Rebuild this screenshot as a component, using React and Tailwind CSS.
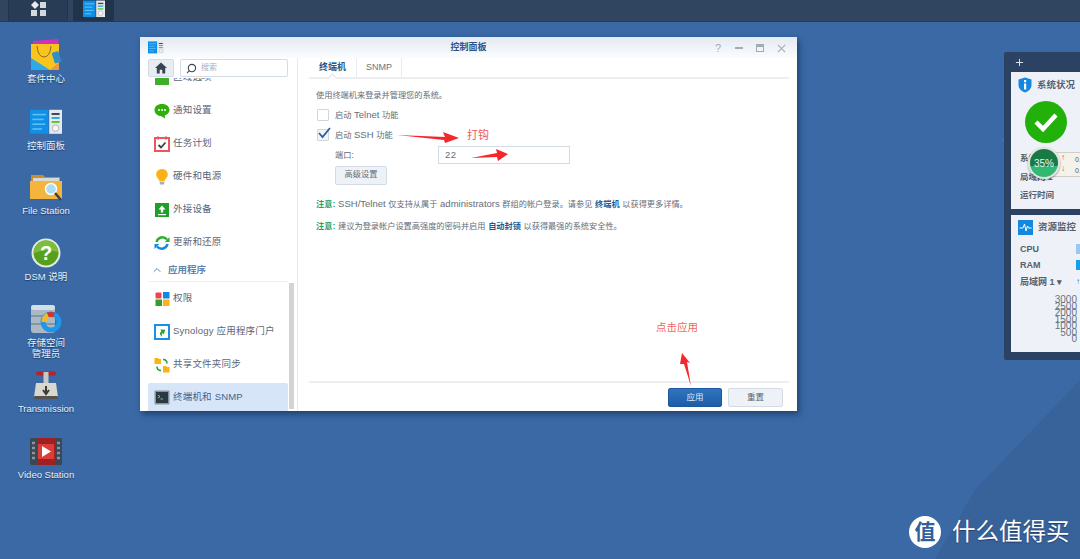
import React from "react";
import { Search, ChevronUp, Plus } from "lucide-react";

const font = { fontFamily: '"Liberation Sans","Noto Sans CJK SC",sans-serif' };

const PanelIcon = ({ size = 32 }) => (
  <svg width={size} height={size * 0.8} viewBox="0 0 40 32">
    <rect x="0" y="1" width="23" height="30" fill="#0f8fe6" />
    <rect x="3" y="6" width="17" height="2" fill="#5cc0f5" />
    <rect x="3" y="12" width="14" height="2" fill="#5cc0f5" />
    <rect x="3" y="18" width="16" height="2" fill="#5cc0f5" />
    <rect x="3" y="24" width="12" height="2" fill="#5cc0f5" />
    <rect x="24" y="1" width="16" height="30" fill="#e6e9ec" />
    <rect x="27" y="5" width="10" height="2.5" fill="#3b4a58" />
    <rect x="27" y="10" width="10" height="2.5" fill="#37a8df" />
    <rect x="27" y="15" width="10" height="2.5" fill="#6cbf3b" />
    <circle cx="32" cy="24" r="4" fill="#fafafa" stroke="#9aa5ad" />
  </svg>
);

const desktopIcons = [
  {
    top: 38,
    label: ["套件中心"],
    icon: (
      <svg width="32" height="34" viewBox="0 0 32 34">
        <path d="M3 3 L28 1 L29 8 L3 8Z" fill="#d62fc0" />
        <rect x="1" y="6" width="28" height="26" fill="#f7c51e" />
        <path d="M1 32 V20 L20 32Z" fill="#2fa9e6" />
        <path d="M20 32 L29 24 V32Z" fill="#e79a45" />
        <path d="M7 8 Q8 19 14 19 Q20 19 21 8" fill="none" stroke="#8a6a20" strokeWidth="1" />
        <rect x="23" y="14" width="7" height="11" rx="1" fill="#2f8fc9" transform="rotate(-18 26 19)" />
      </svg>
    ),
  },
  { top: 105, label: ["控制面板"], icon: <PanelIcon /> },
  {
    top: 170,
    label: ["File Station"],
    icon: (
      <svg width="32" height="28" viewBox="0 0 32 28">
        <path d="M1 5 V2 H13 L15 4 H30 V10 H1Z" fill="#c98f2e" />
        <rect x="3" y="5" width="26" height="5" fill="#d9d9d6" />
        <path d="M0 8 H32 V26 H0Z" fill="#f5b53c" />
        <circle cx="21" cy="16" r="5.5" fill="#a8dcf7" stroke="#fff" strokeWidth="1.5" />
        <path d="M25 20 L31 27" stroke="#38434d" strokeWidth="2.5" />
      </svg>
    ),
  },
  {
    top: 236,
    label: ["DSM 说明"],
    icon: (
      <svg width="30" height="30" viewBox="0 0 30 30">
        <circle cx="15" cy="15" r="14.5" fill="#e4e8e2" />
        <circle cx="15" cy="15" r="12.5" fill="#55a01c" />
        <path d="M3 15 a12 12 0 0 1 24 -1 q-12 -4 -24 1Z" fill="#7dbd3c" />
        <text x="15" y="22" textAnchor="middle" fontSize="20" fontWeight="700" fill="#fff" style={font}>?</text>
      </svg>
    ),
  },
  {
    top: 302,
    label: ["存储空间", "管理员"],
    icon: (
      <svg width="32" height="30" viewBox="0 0 32 30">
        <rect x="1" y="1" width="24" height="28" rx="3" fill="#a9bac6" />
        <rect x="1" y="1" width="24" height="5" rx="2.5" fill="#d2dfe7" />
        <path d="M1 12 H25 M1 20 H25" stroke="#62737f" strokeWidth="1.2" />
        <circle cx="21" cy="18" r="8" fill="none" stroke="#1e96ea" strokeWidth="5" />
        <path d="M14 18 a8 8 0 0 1 4 -7" fill="none" stroke="#f2b92b" strokeWidth="5" />
        <path d="M18 11 a8 8 0 0 1 6 0" fill="none" stroke="#d8322a" strokeWidth="5" />
      </svg>
    ),
  },
  {
    top: 368,
    label: ["Transmission"],
    icon: (
      <svg width="26" height="28" viewBox="0 0 26 28">
        <rect x="3" y="0.5" width="20" height="4" rx="2" fill="#b6242a" />
        <rect x="10.5" y="1" width="5" height="13" fill="#c9c9c4" />
        <path d="M3 12 H23 L25 26 H1Z" fill="#d8d7d0" />
        <rect x="1" y="25" width="24" height="3" rx="1" fill="#55534e" />
        <path d="M13 15 V22 M10 19 L13 23 L16 19" stroke="#3b3a36" strokeWidth="2" fill="none" />
      </svg>
    ),
  },
  {
    top: 434,
    label: ["Video Station"],
    icon: (
      <svg width="32" height="27" viewBox="0 0 32 27">
        <rect width="32" height="27" rx="1.5" fill="#3c4754" />
        <rect x="7" y="0" width="18" height="27" fill="#9f1f22" />
        <rect x="8" y="6" width="16" height="15" fill="#dd3d37" />
        <path d="M12 8 L21 13.5 L12 19Z" fill="#fff" />
        <path d="M2 5 H5 M2 10 H5 M2 15 H5 M2 20 H5 M27 5 H30 M27 10 H30 M27 15 H30 M27 20 H30" stroke="#8a95a1" strokeWidth="2.5" />
      </svg>
    ),
  },
];

const rowIcons = {
  region: <span className="block w-[14px] h-[14px] bg-[#3fae2a]" />,
  notify: (
    <svg width="16" height="16" viewBox="0 0 16 16">
      <path d="M8 1 C3.5 1 0.5 3.6 0.5 7 C0.5 10.4 3.5 13 7 13 L11 15.5 L10.8 12.4 C13.6 11.4 15.5 9.4 15.5 7 C15.5 3.6 12.5 1 8 1Z" fill="#2fae0c" />
      <circle cx="5" cy="7" r="1" fill="#fff" />
      <circle cx="8" cy="7" r="1" fill="#fff" />
      <circle cx="11" cy="7" r="1" fill="#fff" />
    </svg>
  ),
  task: (
    <svg width="16" height="16" viewBox="0 0 16 16">
      <rect x="1" y="2" width="14" height="13" fill="#fff" stroke="#f0545c" strokeWidth="2" />
      <rect x="3" y="0.5" width="2" height="3" fill="#f0545c" />
      <rect x="11" y="0.5" width="2" height="3" fill="#f0545c" />
      <path d="M4.5 9 L7 11.5 L11.5 6.5" fill="none" stroke="#3b3f46" strokeWidth="1.8" />
    </svg>
  ),
  power: (
    <svg width="16" height="18" viewBox="0 0 16 18">
      <path d="M8 1 C4 1 2.2 4 2.2 6.5 C2.2 9.5 5 10.5 5.5 13.5 H10.5 C11 10.5 13.8 9.5 13.8 6.5 C13.8 4 12 1 8 1Z" fill="#fbb215" />
      <rect x="5.8" y="14" width="4.4" height="2.5" fill="#a9aeb4" />
    </svg>
  ),
  device: (
    <svg width="16" height="16" viewBox="0 0 16 16">
      <rect x="1" y="1" width="14" height="14" fill="#1f9e28" />
      <path d="M8 3.5 L11.5 7.5 H9.2 V10.5 H6.8 V7.5 H4.5Z" fill="#fff" />
      <rect x="4" y="12" width="8" height="1.2" fill="#fff" />
    </svg>
  ),
  update: (
    <svg width="16" height="16" viewBox="0 0 16 16" fill="none" strokeWidth="2.4">
      <path d="M2.5 7 A6 6 0 0 1 13 4.5" stroke="#2fae2c" />
      <path d="M13.5 9 A6 6 0 0 1 3 11.5" stroke="#1488e0" />
      <path d="M15.5 2 V7 H10.8Z" fill="#2fae2c" strokeWidth="0" />
      <path d="M0.5 14 V9 H5.2Z" fill="#1488e0" strokeWidth="0" />
    </svg>
  ),
  perm: (
    <svg width="15" height="15" viewBox="0 0 15 15">
      <rect x="0.5" y="1.5" width="6" height="6" rx="1" fill="#f0454f" />
      <rect x="8" y="1" width="6.5" height="6.5" fill="#1488e0" />
      <rect x="0.5" y="8.5" width="6.5" height="6.5" fill="#2fa12c" />
      <rect x="8" y="8.5" width="6.5" height="6.5" fill="#fbb215" />
    </svg>
  ),
  portal: (
    <svg width="16" height="16" viewBox="0 0 16 16">
      <rect x="1" y="1" width="14" height="14" fill="#fff" stroke="#1a8fe5" strokeWidth="2" />
      <path d="M5 12 L5 9 Q5 7 8 7 V5 L12 8 L8 11 V9 Q6.5 9 5 12Z" fill="#22a032" transform="rotate(-35 8 8)" />
    </svg>
  ),
  sync: (
    <svg width="16" height="16" viewBox="0 0 16 16">
      <path d="M0.5 1 H4 L5 2 H7 V7 H0.5Z" fill="#fbb215" />
      <path d="M9 9 H12 L13 10 H15.5 V15.5 H9Z" fill="#fbb215" />
      <path d="M9 2.5 Q13 2.5 13 6.5 M7 13.5 Q3 13.5 3 9.5" fill="none" stroke="#1fa03a" strokeWidth="1.5" />
    </svg>
  ),
  term: (
    <svg width="16" height="15" viewBox="0 0 16 15">
      <rect x="0.5" y="0.5" width="15" height="14" rx="1" fill="#8b949c" />
      <rect x="2" y="2" width="12" height="11" fill="#2a3a40" />
      <path d="M4 5 L6 6.5 L4 8 M6.5 9 H9" stroke="#7fd0c0" strokeWidth="0.9" fill="none" />
    </svg>
  ),
};

// the chinese glyphs in the screenshot run narrower than the latin ones
const Mix = ({ text }) =>
  text.split(/([\u4e00-\u9fff。:]+)/).map((part, i) =>
    /[\u4e00-\u9fff。:]/.test(part) ? (
      <span key={i} className="text-[8.2px]">{part}</span>
    ) : (
      <span key={i} className="whitespace-pre">{part}</span>
    )
  );

const Row = ({ icon, text, active }) => (
  <div className="h-[33px] flex items-center shrink-0">
    <div className={`flex items-center gap-[3px] w-full h-[29px] px-[6px] rounded-[2px] ${active ? "bg-[#d6e5f7] text-[#44648f]" : "text-[#5b6675]"}`}>
      <span className="w-4 flex justify-center">{icon}</span>
      <span className="text-[9.5px] tracking-[0.2px] whitespace-nowrap">{text}</span>
    </div>
  </div>
);

const Arrow = ({ className, w, h, d }) => (
  <svg className={`absolute ${className}`} width={w} height={h} viewBox={`0 0 ${w} ${h}`}>
    <path d={d} fill="#f4282c" />
  </svg>
);

export default function App() {
  return (
    <div className="relative w-[1080px] h-[559px] overflow-hidden bg-[#3a69a6] text-[#56606c]" style={font}>
      {/* wallpaper shading */}
      <svg className="absolute inset-0" width="1080" height="559" viewBox="0 0 1080 559">
        <path d="M975 490 L935 559 H1080 V380Z" fill="#38629a" />
        <path d="M1080 100 L1000 140 L1080 190Z" fill="#4a78b4" opacity="0.5" />
      </svg>

      {/* top bar */}
      <div className="absolute inset-x-0 top-0 h-[22px] flex bg-[#304660] border-b border-[#253a55]">
        <div className="ml-2 w-[60px] h-full bg-[#283c55] flex items-start justify-center pt-[1px] border-x border-[#22344a]">
          <svg width="16" height="16" viewBox="0 0 16 16">
            <path d="M5 0 L9 4 L5 8 L1 4Z" fill="#e9ecef" />
            <rect x="10" y="1" width="6" height="6" fill="#d5d9dd" />
            <rect x="1" y="9" width="6" height="6" fill="#d5d9dd" />
            <rect x="10" y="9" width="6" height="6" fill="#d5d9dd" />
          </svg>
        </div>
        <div className="ml-[5px] w-[41px] h-full bg-[#22344a] flex items-start justify-center">
          <PanelIcon size={22} />
        </div>
      </div>

      {/* desktop icons */}
      {desktopIcons.map((item) => (
        <div key={item.label[0]} className="absolute left-0 w-[92px] flex flex-col items-center" style={{ top: item.top }}>
          <div className="h-[34px] flex items-center">{item.icon}</div>
          <div className="mt-[1px] text-[9.5px] leading-[11px] text-center text-[#e6f0fb] [text-shadow:0_1px_1px_#1d3a60]">
            {item.label.map((l) => (
              <div key={l}>{l}</div>
            ))}
          </div>
        </div>
      ))}

      {/* control panel window */}
      <div className="absolute left-[140px] top-[37px] w-[657px] h-[374px] bg-white shadow-[2px_3px_6px_rgba(10,30,60,0.55)] flex flex-col">
        <div className="h-[21px] shrink-0 relative flex items-center justify-center pt-[1px] bg-gradient-to-b from-[#e4eaf2] to-[#fbfcfe]">
          <span className="absolute left-2 top-[4px]">
            <PanelIcon size={16} />
          </span>
          <span className="text-[9px] font-bold text-[#2e5380]">控制面板</span>
          <div className="absolute right-[11px] top-[5px] flex items-center gap-[13px] text-[#a4abb3]">
            <span className="text-[11px] leading-3 w-[8px] text-center">?</span>
            <span className="w-2 h-[1.5px] bg-[#a4abb3]" />
            <span className="w-2 h-2 border border-t-[3px] border-[#a4abb3]" />
            <svg width="9" height="9" viewBox="0 0 10 10">
              <path d="M1 1 L9 9 M9 1 L1 9" stroke="#a4abb3" strokeWidth="1.2" />
            </svg>
          </div>
        </div>

        <div className="flex-1 flex min-h-0">
          {/* sidebar */}
          <div className="w-[158px] shrink-0 border-r border-[#e6e9ed] relative flex flex-col pl-2">
            <div className="h-5 shrink-0 flex items-center gap-[6px] relative z-10 bg-white">
              <div className="w-[26px] h-[18px] rounded-[2px] bg-[#e8edf3] border border-[#d3dbe4] flex items-center justify-center">
                <svg width="12" height="12" viewBox="0 0 12 12">
                  <path d="M6 0.5 L12 6 H10.2 V11.5 H7.3 V7.8 H4.7 V11.5 H1.8 V6 H0Z" fill="#3b4350" />
                </svg>
              </div>
              <div className="w-[108px] h-[18px] border border-[#d3dbe4] rounded-[2px] flex items-center pl-[5px] gap-[4px]">
                <Search size={11} className="text-[#3b4350] -scale-x-100" strokeWidth={2.4} />
                <span className="text-[8px] text-[#a9b1bb]">搜索</span>
              </div>
            </div>
            <div className="flex-1 w-[140px] overflow-hidden">
              <div className="-mt-[17px] flex flex-col">
                <Row icon={rowIcons.region} text="区域选项" />
                <Row icon={rowIcons.notify} text="通知设置" />
                <Row icon={rowIcons.task} text="任务计划" />
                <Row icon={rowIcons.power} text="硬件和电源" />
                <Row icon={rowIcons.device} text="外接设备" />
                <Row icon={rowIcons.update} text="更新和还原" />
                <div className="h-[23px] shrink-0 flex items-center gap-[5px] pl-[3px] border-b border-[#eef1f5] text-[#5f84ad]">
                  <ChevronUp size={12} strokeWidth={2} />
                  <span className="text-[9.5px] font-bold">应用程序</span>
                </div>
                <Row icon={rowIcons.perm} text="权限" />
                <Row icon={rowIcons.portal} text="Synology 应用程序门户" />
                <Row icon={rowIcons.sync} text="共享文件夹同步" />
                <Row active icon={rowIcons.term} text="终端机和 SNMP" />
              </div>
            </div>
            <div className="absolute left-[149px] top-[225px] w-[5px] h-[126px] bg-[#d3d3d3]" />
          </div>

          {/* content */}
          <div className="flex-1 flex flex-col pl-[11px] pr-[8px] min-w-0">
            <div className="h-[21px] shrink-0 flex border-b-2 border-[#eceef1]">
              <div className="w-[48px] flex items-center justify-center text-[9px] font-bold text-[#2e5380] border-r border-[#e8ebef] relative">
                终端机
                <span className="absolute bottom-[-2px] left-[20px] w-[7px] h-[7px] rotate-45 bg-white border-l border-t border-[#dfe3e8] translate-y-[3px]" />
              </div>
              <div className="w-[45px] flex items-center justify-center text-[9px] text-[#6a7380] border-r border-[#e8ebef]">SNMP</div>
            </div>

            <div className="flex-1 pl-[7px] pt-[10px] text-[9.5px] text-[#636d79] flex flex-col">
              <div className="h-[11px] leading-[11px]"><Mix text="使用终端机来登录并管理您的系统。" /></div>
              <div className="mt-[5px] h-[20px] flex items-center gap-[6px]">
                <span className="w-[12px] h-[12px] ml-[1px] border border-[#cfd6de] rounded-[1px] bg-white" />
                <span className="leading-[11px]"><Mix text="启动 Telnet 功能" /></span>
              </div>
              <div className="h-[20px] flex items-center gap-[6px] relative">
                <span className="w-[12px] h-[12px] ml-[1px] border border-[#cfd6de] rounded-[1px] bg-[#f2f5f8]" />
                <svg className="absolute left-[1px] top-[1px]" width="15" height="14" viewBox="0 0 15 14">
                  <path d="M2 7 L5.5 11 L13 2" fill="none" stroke="#2a5f9e" strokeWidth="1.8" />
                </svg>
                <span className="leading-[11px]"><Mix text="启动 SSH 功能" /></span>
              </div>
              <div className="h-[20px] flex items-center pl-[19px]">
                <span className="w-[103px] leading-[11px]"><Mix text="端口:" /></span>
                <div className="w-[132px] h-[18px] border border-[#d3dbe4] flex items-center pl-[6px] tracking-[0.5px]">22</div>
              </div>
              <div className="mt-[1px] pl-[19px]">
                <div className="w-[52px] h-[19px] rounded-[2px] border border-[#d3dbe4] bg-[#eef2f7] flex items-center justify-center text-[8.2px]">高级设置</div>
              </div>
              <div className="mt-[13px] h-[11px] leading-[11px] whitespace-nowrap">
                <span className="text-[#2aa06e] font-bold"><Mix text="注意:" /></span>
                <span className="ml-[3px]"><Mix text="SSH/Telnet 仅支持从属于 administrators 群组的帐户登录。请参见 " /></span>
                <span className="text-[#1d5a95] font-bold"><Mix text="终端机" /></span>
                <span><Mix text=" 以获得更多详情。" /></span>
              </div>
              <div className="mt-[11px] h-[11px] leading-[11px] whitespace-nowrap">
                <span className="text-[#2aa06e] font-bold"><Mix text="注意:" /></span>
                <span className="ml-[3px]"><Mix text="建议为登录帐户设置高强度的密码并启用 " /></span>
                <span className="text-[#1d5a95] font-bold"><Mix text="自动封锁" /></span>
                <span><Mix text=" 以获得最强的系统安全性。" /></span>
              </div>
            </div>

            <div className="h-[30px] shrink-0 border-t-2 border-[#eceef1] flex items-start justify-end gap-[6px] pr-[6px] pt-[5px]">
              <div className="w-[54px] h-[19px] rounded-[2px] bg-gradient-to-b from-[#2f75c0] to-[#1f5ca8] border border-[#1d569c] flex items-center justify-center text-[8.5px] text-[#dfeafa]">应用</div>
              <div className="w-[55px] h-[19px] rounded-[2px] bg-[#eef2f7] border border-[#d3dbe4] flex items-center justify-center text-[8.5px] text-[#59636f]">重置</div>
            </div>
          </div>
        </div>
      </div>

      {/* annotations */}
      <Arrow className="left-[397px] top-[132px]" w={63} h={12} d="M0 3 L48 5 L46 0 L62 6 L48 11 L47 8Z" />
      <Arrow className="left-[471px] top-[149px]" w={38} h={12} d="M0 9 L26 4 L25 0 L37 5 L27 12 L26 8Z" />
      <Arrow className="left-[679px] top-[352px]" w={14} h={35} d="M3 1 L11 11 L8 10 L12 34 L5 12 L1 12Z" />
      <div className="absolute left-[467px] top-[128px] text-[11px] leading-[14px] text-[#f4555a]">打钩</div>
      <div className="absolute left-[656px] top-[320px] text-[10.5px] leading-[14px] text-[#f4655f]">点击应用</div>

      {/* right widgets */}
      <div className="absolute left-[1004px] top-[52px] w-[90px] h-[308px] rounded-[2px] bg-[#2c4263] flex flex-col pl-[7px]">
        <div className="h-[20px] flex items-center pl-[3px] text-[#e6edf5]">
          <Plus size={11} strokeWidth={2} />
        </div>
        <div className="h-[137px] shrink-0 bg-[#eef2f8] flex flex-col text-[#565f6b]">
          <div className="h-[26px] flex items-center pl-[7px] gap-[5px]">
            <svg width="14" height="16" viewBox="0 0 14 16">
              <path d="M7 0.5 L13.5 2.5 V8 C13.5 12 10 14.5 7 15.5 C4 14.5 0.5 12 0.5 8 V2.5Z" fill="#1488e0" />
              <rect x="6" y="3" width="2.2" height="2.2" fill="#fff" />
              <rect x="6" y="6.5" width="2.2" height="6" fill="#fff" />
            </svg>
            <span className="text-[9.5px] font-bold">系统状况</span>
          </div>
          <div className="pl-[14px] mt-[3px]">
            <div className="w-[42px] h-[42px] rounded-full bg-[#22b10a] flex items-center justify-center">
              <svg width="26" height="22" viewBox="0 0 26 22">
                <path d="M3 11 L10 18 L23 4" fill="none" stroke="#fff" strokeWidth="4.5" />
              </svg>
            </div>
          </div>
          <div className="pl-[9px] mt-[6px] text-[8.5px] font-bold leading-[18.5px] whitespace-nowrap">
            <div>系统</div>
            <div>局域网 1</div>
            <div>运行时间</div>
          </div>
        </div>
        <div className="mt-[6px] h-[137px] shrink-0 bg-[#eef2f8] flex flex-col text-[#565f6b]">
          <div className="h-[22px] flex items-center pl-[7px] gap-[5px] mt-[1px]">
            <svg width="15" height="15" viewBox="0 0 15 15">
              <rect width="15" height="15" fill="#1488e0" />
              <path d="M1.5 8 H5 L6.5 4 L8 11 L9.5 6 L10.5 8 H13.5" fill="none" stroke="#fff" strokeWidth="1" />
            </svg>
            <span className="text-[9.5px] font-bold">资源监控</span>
          </div>
          <div className="pl-[9px] mt-[3px] text-[9px] font-bold leading-[16px]">
            <div className="flex w-[60px] justify-between items-center">
              CPU
              <span className="w-[4px] h-[10px] bg-[#9cc7ee]" />
            </div>
            <div className="flex w-[60px] justify-between items-center">
              RAM
              <span className="w-[4px] h-[10px] bg-[#1a9bf0]" />
            </div>
            <div className="flex w-[60px] justify-between items-center mt-[1px] whitespace-nowrap">
              局域网 1 ▾
              <span className="text-[#1a7fd0] text-[8px]">↑</span>
            </div>
          </div>
          <div className="w-[66px] mt-[7px] text-[10px] leading-[6.5px] text-right text-[#6a7380]">
            <div>3000</div>
            <div>2500</div>
            <div>2000</div>
            <div>1500</div>
            <div>1000</div>
            <div>500</div>
            <div>0</div>
          </div>
        </div>
      </div>

      {/* floating speed badge */}
      <div className="absolute left-[1052px] top-[152px] w-[30px] h-[25px] bg-[#f4f2ea] border border-[#d0cec6] pl-[22px] text-[7px] leading-[11px] pt-[1px] text-[#57606b]">
        <div>0.</div>
        <div>0.</div>
      </div>
      <span className="absolute left-[1061px] top-[152px] text-[8px] leading-[11px] font-bold text-[#e2513c]">↑</span>
      <span className="absolute left-[1061px] top-[163px] text-[8px] leading-[11px] font-bold text-[#2ba84a]">↓</span>
      <div className="absolute left-[1028px] top-[147px] w-[32px] h-[32px] rounded-full border-[2px] border-[#dfe4e2] bg-[linear-gradient(#1a7a45_0_62%,#33b872_62%_100%)] flex items-center justify-center text-[10px] text-[#e9f7ef] shadow-[0_1px_2px_rgba(0,0,0,0.4)]">
        35%
      </div>

      {/* watermark */}
      <div className="absolute left-[909px] top-[516px] flex items-center gap-[11px]">
        <div className="w-[32px] h-[32px] rounded-full bg-white flex items-center justify-center text-[21px] font-bold text-[#2f5f9c]">值</div>
        <span className="text-[23.5px] leading-[32px] text-white [text-shadow:0_1px_1px_rgba(20,40,70,0.6)]">什么值得买</span>
      </div>
    </div>
  );
}
